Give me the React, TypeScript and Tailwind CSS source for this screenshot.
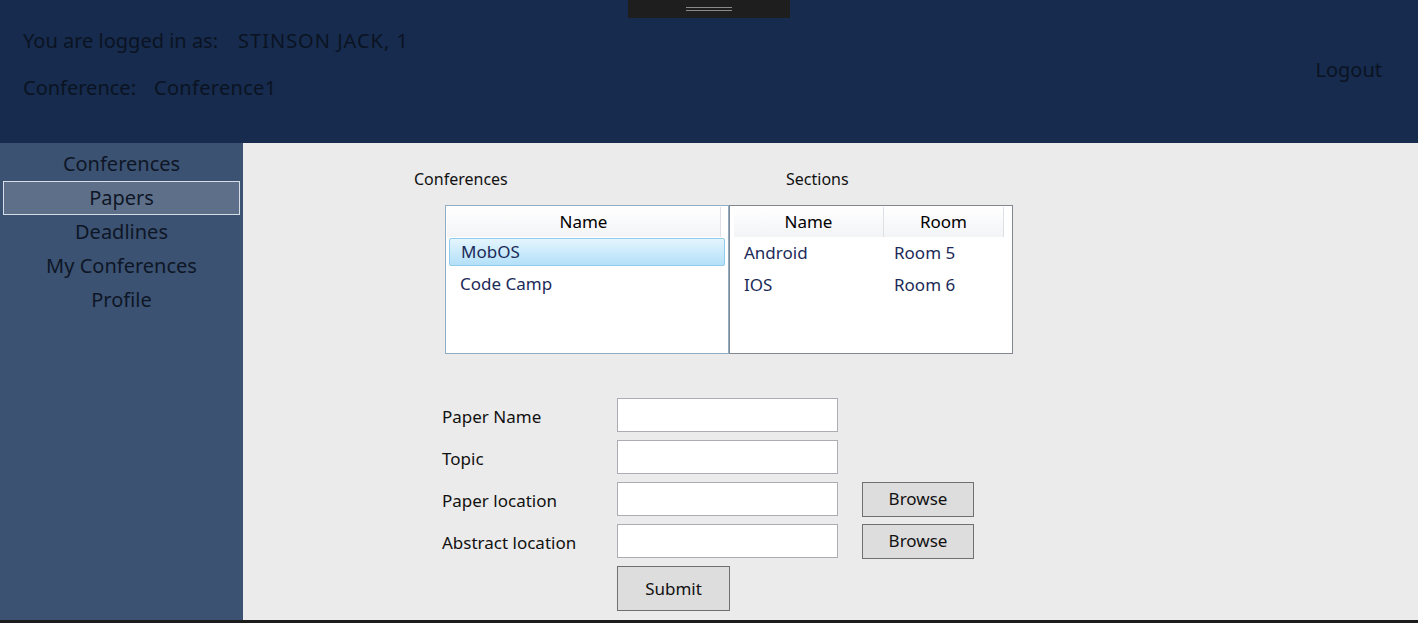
import type { ReactNode } from "react";

const font = "font-['Noto_Sans','Open_Sans',sans-serif]";

function NavItem({ label, active }: { label: string; active?: boolean }) {
  return (
    <div
      className={
        "mx-[3px] flex h-[34px] items-center justify-center text-[20px] text-[#0e1626] " +
        (active ? "border border-[#d6dde6] bg-[#5e7089]" : "border border-transparent")
      }
    >
      {label}
    </div>
  );
}

function HeaderCell({ children, w }: { children: ReactNode; w: string }) {
  return (
    <div className={"flex h-[30px] items-center justify-center border-r border-[#dde0e4] bg-gradient-to-b from-white to-[#f3f4f6] text-[17px] text-black " + w}>
      {children}
    </div>
  );
}

function Field({ label, browse }: { label: string; browse?: boolean }) {
  return (
    <div className="flex h-[42px] items-center">
      <div className="w-[175px] pt-[3px] text-[17px] text-[#111]">{label}</div>
      <div className="h-[34px] w-[221px] border border-[#abadb3] bg-white" />
      {browse && (
        <button className="ml-[24px] h-[35px] w-[112px] border border-[#707070] bg-[#dddddd] text-[17px] text-[#111]">
          Browse
        </button>
      )}
    </div>
  );
}

export default function App() {
  return (
    <div className={"flex h-[623px] w-[1418px] flex-col overflow-hidden bg-[#ebebeb] " + font}>
      <header className="relative flex h-[143px] shrink-0 items-start justify-between bg-[#162b4d] px-[23px] pt-[27px] text-[20px] text-[#0b1322]">
        <div className="absolute left-[628px] top-0 flex h-[18px] w-[162px] flex-col items-center justify-center gap-[2px] bg-[#1e1e1e]">
          <div className="h-px w-[46px] bg-[#8a8a8a]" />
          <div className="h-px w-[46px] bg-[#8a8a8a]" />
        </div>
        <div className="leading-[28px]">
          <div>
            You are logged in as:<span className="ml-[20px] tracking-[1px]">STINSON JACK, 1</span>
          </div>
          <div className="mt-[19px]">
            Conference:<span className="ml-[18px] tracking-[0.3px]">Conference1</span>
          </div>
        </div>
        <div className="mr-[13px] mt-[29px] leading-[28px]">Logout</div>
      </header>

      <div className="flex flex-1">
        <nav className="w-[243px] shrink-0 bg-[#3b5272] pt-[4px]">
          <NavItem label="Conferences" />
          <NavItem label="Papers" active />
          <NavItem label="Deadlines" />
          <NavItem label="My Conferences" />
          <NavItem label="Profile" />
        </nav>

        <main className="flex-1 pl-[171px] pt-[25px]">
          <div className="flex text-[16px] leading-[22px] text-[#111]">
            <div className="w-[372px]">Conferences</div>
            <div>Sections</div>
          </div>

          <div className="ml-[31px] mt-[15px] flex">
            <div className="h-[149px] w-[284px] border border-[#8fadc4] bg-white p-px">
              <div className="flex">
                <HeaderCell w="w-[274px]">Name</HeaderCell>
              </div>
              <div className="mx-[2px] mt-[1px] flex h-[28px] items-center rounded-[2px] border border-[#8fcbea] bg-gradient-to-b from-[#e4f5fd] to-[#b3e0f9] pl-[11px] text-[17px] text-[#1b2a58]">
                MobOS
              </div>
              <div className="flex h-[36px] items-center pl-[13px] text-[17px] text-[#1b2a58]">Code Camp</div>
            </div>
            <div className="h-[149px] w-[284px] border border-[#828790] bg-white px-[4px] py-px">
              <div className="flex">
                <HeaderCell w="w-[150px]">Name</HeaderCell>
                <HeaderCell w="w-[120px]">Room</HeaderCell>
              </div>
              <div className="flex h-[32px] items-center text-[17px] text-[#1b2a58]">
                <div className="w-[150px] pl-[10px]">Android</div>
                <div className="pl-[10px]">Room 5</div>
              </div>
              <div className="flex h-[32px] items-center text-[17px] text-[#1b2a58]">
                <div className="w-[150px] pl-[10px]">IOS</div>
                <div className="pl-[10px]">Room 6</div>
              </div>
            </div>
          </div>

          <div className="ml-[28px] mt-[40px]">
            <Field label="Paper Name" />
            <Field label="Topic" />
            <Field label="Paper location" browse />
            <Field label="Abstract location" browse />
            <button className="ml-[175px] mt-[4px] h-[45px] w-[113px] border border-[#707070] bg-[#dddddd] text-[17px] text-[#111]">
              Submit
            </button>
          </div>
        </main>
      </div>
      <div className="h-[3px] shrink-0 bg-[#1c1c1c]" />
    </div>
  );
}
